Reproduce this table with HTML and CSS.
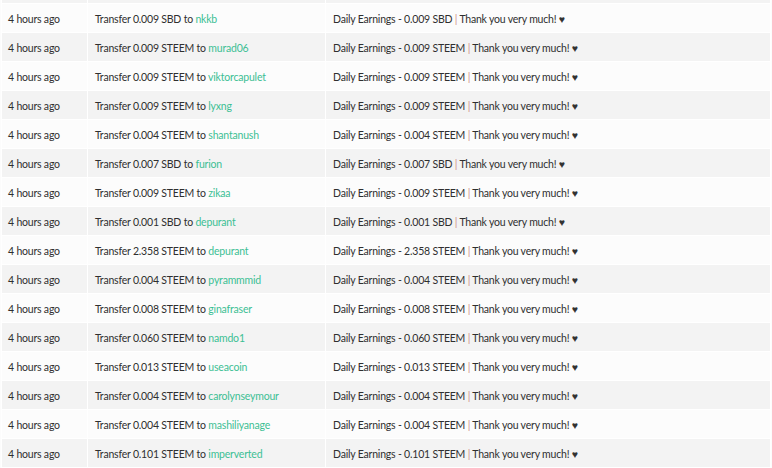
FILE: index.html
```html
<!DOCTYPE html>
<html lang="en">
<head>
    <meta charset="UTF-8">
    <title>Transfers</title>
    <link rel="stylesheet" href="styles.css">
</head>
<body>
    <div class="wrap">
        <table class="history">
            <tbody>
                <tr class="edge"><td></td><td></td><td></td></tr>
                <tr><td>4 hours ago</td><td>Transfer 0.009 SBD to <a href="#">nkkb</a></td><td>Daily Earnings - 0.009 SBD <span class="sep">|</span> Thank you very much! <span class="heart">&#9829;</span></td></tr>
                <tr><td>4 hours ago</td><td>Transfer 0.009 STEEM to <a href="#">murad06</a></td><td>Daily Earnings - 0.009 STEEM <span class="sep">|</span> Thank you very much! <span class="heart">&#9829;</span></td></tr>
                <tr><td>4 hours ago</td><td>Transfer 0.009 STEEM to <a href="#">viktorcapulet</a></td><td>Daily Earnings - 0.009 STEEM <span class="sep">|</span> Thank you very much! <span class="heart">&#9829;</span></td></tr>
                <tr><td>4 hours ago</td><td>Transfer 0.009 STEEM to <a href="#">lyxng</a></td><td>Daily Earnings - 0.009 STEEM <span class="sep">|</span> Thank you very much! <span class="heart">&#9829;</span></td></tr>
                <tr><td>4 hours ago</td><td>Transfer 0.004 STEEM to <a href="#">shantanush</a></td><td>Daily Earnings - 0.004 STEEM <span class="sep">|</span> Thank you very much! <span class="heart">&#9829;</span></td></tr>
                <tr><td>4 hours ago</td><td>Transfer 0.007 SBD to <a href="#">furion</a></td><td>Daily Earnings - 0.007 SBD <span class="sep">|</span> Thank you very much! <span class="heart">&#9829;</span></td></tr>
                <tr><td>4 hours ago</td><td>Transfer 0.009 STEEM to <a href="#">zikaa</a></td><td>Daily Earnings - 0.009 STEEM <span class="sep">|</span> Thank you very much! <span class="heart">&#9829;</span></td></tr>
                <tr><td>4 hours ago</td><td>Transfer 0.001 SBD to <a href="#">depurant</a></td><td>Daily Earnings - 0.001 SBD <span class="sep">|</span> Thank you very much! <span class="heart">&#9829;</span></td></tr>
                <tr><td>4 hours ago</td><td>Transfer 2.358 STEEM to <a href="#">depurant</a></td><td>Daily Earnings - 2.358 STEEM <span class="sep">|</span> Thank you very much! <span class="heart">&#9829;</span></td></tr>
                <tr><td>4 hours ago</td><td>Transfer 0.004 STEEM to <a href="#">pyrammmid</a></td><td>Daily Earnings - 0.004 STEEM <span class="sep">|</span> Thank you very much! <span class="heart">&#9829;</span></td></tr>
                <tr><td>4 hours ago</td><td>Transfer 0.008 STEEM to <a href="#">ginafraser</a></td><td>Daily Earnings - 0.008 STEEM <span class="sep">|</span> Thank you very much! <span class="heart">&#9829;</span></td></tr>
                <tr><td>4 hours ago</td><td>Transfer 0.060 STEEM to <a href="#">namdo1</a></td><td>Daily Earnings - 0.060 STEEM <span class="sep">|</span> Thank you very much! <span class="heart">&#9829;</span></td></tr>
                <tr><td>4 hours ago</td><td>Transfer 0.013 STEEM to <a href="#">useacoin</a></td><td>Daily Earnings - 0.013 STEEM <span class="sep">|</span> Thank you very much! <span class="heart">&#9829;</span></td></tr>
                <tr><td>4 hours ago</td><td>Transfer 0.004 STEEM to <a href="#">carolynseymour</a></td><td>Daily Earnings - 0.004 STEEM <span class="sep">|</span> Thank you very much! <span class="heart">&#9829;</span></td></tr>
                <tr><td>4 hours ago</td><td>Transfer 0.004 STEEM to <a href="#">mashiliyanage</a></td><td>Daily Earnings - 0.004 STEEM <span class="sep">|</span> Thank you very much! <span class="heart">&#9829;</span></td></tr>
                <tr><td>4 hours ago</td><td>Transfer 0.101 STEEM to <a href="#">imperverted</a></td><td>Daily Earnings - 0.101 STEEM <span class="sep">|</span> Thank you very much! <span class="heart">&#9829;</span></td></tr>
            </tbody>
        </table>
    </div>
</body>
</html>
```

FILE: styles.css
```css
body {
    margin: 0;
    background: #fcfcfc;
    font-family: "Source Sans Pro", Lato, "Liberation Sans", sans-serif;
    font-size: 10.5px;
    letter-spacing: -0.2px;
    color: #2f2f2f;
}
.wrap {
    height: 468px;
    overflow: hidden;
    padding: 0 1px;
}
.history {
    width: 100%;
    border-collapse: collapse;
}
.history td {
    height: 26px;
    padding: 2px 7px 0 7px;
    border: 1px solid #fff;
    white-space: nowrap;
    vertical-align: middle;
}
.history .edge td {
    height: 3px;
    padding: 0;
    border-top: 0;
}
.history td:nth-child(1) {
    width: 72px;
    padding-left: 6px;
}
.history td:nth-child(2) {
    width: 223px;
}
.history tr:nth-child(odd) td {
    background: #f3f3f3;
}
.history tr:nth-child(even) td {
    background: #fcfcfc;
}
.history a {
    color: #3cbf94;
    text-decoration: none;
}
.sep {
    color: #d08a85;
}
.heart {
    color: #333;
}
```
